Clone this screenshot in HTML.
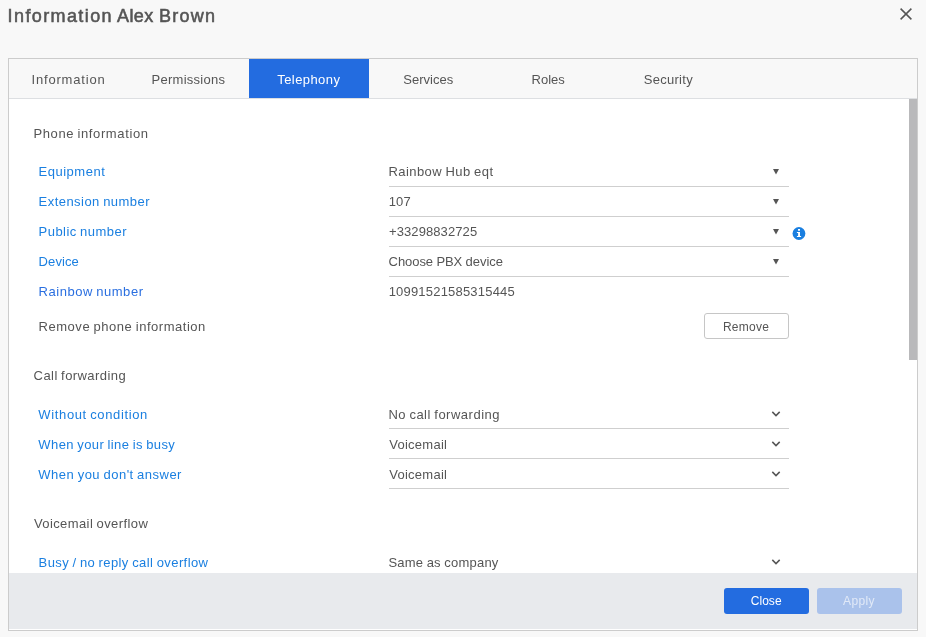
<!DOCTYPE html>
<html lang="en">
<head>
<meta charset="utf-8">
<title>Information Alex Brown</title>
<style>
html,body{margin:0;padding:0}
body{width:926px;height:637px;overflow:hidden;background:#f8f8f8;position:relative;
 font-family:"Liberation Sans",Arial,sans-serif;font-size:13px;color:#555}
.t{position:absolute;white-space:pre;line-height:20px;height:20px;font-size:13px;color:#555}
.title{left:8px;top:4px;font-size:18px;font-weight:400;-webkit-text-stroke:0.55px #555;line-height:24px;height:24px;color:#555}
.panel{position:absolute;left:8px;top:58px;width:908px;height:571px;border:1px solid #ccc;background:#fff;overflow:hidden}
.tabs{position:absolute;left:0;top:0;width:908px;height:39px;background:#f8f8f8;border-bottom:1px solid #dddfe2}
.tab{position:absolute;top:0;width:120px;height:39px;line-height:42px;text-align:center;font-size:13px;color:#555;white-space:pre}
.tab.on{background:#236ce0;color:#fff}
.lbl{color:#1a7fe0}
.lbl.rb{color:#2a6fe0}
.line{position:absolute;left:380px;width:400px;height:1px;background:#cfcfcf}
.thumb{position:absolute;left:900px;top:40px;width:8px;height:261px;background:#b9b9bb}
.footer{position:absolute;left:0;top:514px;width:908px;height:56px;background:#e8eaed}
.btn{position:absolute;box-sizing:border-box;width:85px;height:26px;border-radius:3px;text-align:center;font-size:12px;line-height:27px;white-space:pre}
.btn.remove{left:695px;top:254px;border:1px solid #c6c6c6;background:#fff;color:#555;line-height:27px}
.btn.close{left:715px;top:15px;background:#236ce0;color:#fff}
.btn.apply{left:808px;top:15px;background:#aac2eb;color:#e1e9f7}
svg{position:absolute;overflow:visible}
#root{position:absolute;left:0;top:0;width:926px;height:637px;will-change:transform}
</style>
</head>
<body>
<div id="root">
<div class="t title"><span class="x" id="ti1" style="letter-spacing:1.39px;margin-left:-0.42px;">Information</span></div><div class="t title" style="left:116px"><span class="x" id="ti2" style="letter-spacing:0.34px;margin-left:1.10px;">Alex</span></div><div class="t title" style="left:159px"><span class="x" id="ti3" style="letter-spacing:1.26px;margin-left:0.05px;">Brown</span></div>
<svg style="left:900px;top:8px" width="12" height="12" viewBox="0 0 12 12"><path d="M0.6 0.6 L11.4 11.4 M11.4 0.6 L0.6 11.4" stroke="#555" stroke-width="1.5" fill="none"/></svg>

<div class="panel">
  <div class="tabs">
    <div class="tab" style="left:0px"><span class="x" id="tab0" style="letter-spacing:0.80px;margin-left:-0.95px;">Information</span></div>
    <div class="tab" style="left:120px"><span class="x" id="tab1" style="letter-spacing:0.28px;margin-left:-1.20px;">Permissions</span></div>
    <div class="tab on" style="left:240px"><span class="x" id="tab2" style="letter-spacing:0.42px;margin-left:-0.35px;">Telephony</span></div>
    <div class="tab" style="left:360px"><span class="x" id="tab3" style="letter-spacing:0.01px;margin-left:-1.43px;">Services</span></div>
    <div class="tab" style="left:480px"><span class="x" id="tab4" style="letter-spacing:0.02px;margin-left:-1.55px;">Roles</span></div>
    <div class="tab" style="left:600px"><span class="x" id="tab5" style="letter-spacing:0.28px;margin-left:-1.30px;">Security</span></div>
  </div>
  <div class="t" style="left:25px;top:65px"><span class="x" id="h1" style="letter-spacing:0.62px;word-spacing:-0.85px;margin-left:-0.60px;">Phone information</span></div>
  <div class="t lbl" style="left:30px;top:103px"><span class="x" id="l_equip" style="letter-spacing:0.51px;margin-left:-0.45px;">Equipment</span></div>
  <div class="t" style="left:380px;top:103px"><span class="x" id="v_equip" style="letter-spacing:0.44px;word-spacing:-0.67px;margin-left:-0.55px;">Rainbow Hub eqt</span></div>
  <div class="line" style="top:127px"></div>
  <svg style="left:764px;top:110px" width="6" height="6" viewBox="0 0 6 6"><path d="M0 0H6L3 5.6Z" fill="#555"/></svg>
  <div class="t lbl" style="left:30px;top:133px"><span class="x" id="l_ext" style="letter-spacing:0.46px;word-spacing:-0.69px;margin-left:-0.45px;">Extension number</span></div>
  <div class="t" style="left:380px;top:133px"><span class="x" id="v_ext" style="letter-spacing:0.23px;margin-left:-0.38px;">107</span></div>
  <div class="line" style="top:157px"></div>
  <svg style="left:764px;top:140px" width="6" height="6" viewBox="0 0 6 6"><path d="M0 0H6L3 5.6Z" fill="#555"/></svg>
  <div class="t lbl" style="left:30px;top:163px"><span class="x" id="l_pub" style="letter-spacing:0.46px;word-spacing:-0.69px;margin-left:-0.45px;">Public number</span></div>
  <div class="t" style="left:380px;top:163px"><span class="x" id="v_pub" style="letter-spacing:0.09px;">+33298832725</span></div>
  <div class="line" style="top:187px"></div>
  <svg style="left:764px;top:170px" width="6" height="6" viewBox="0 0 6 6"><path d="M0 0H6L3 5.6Z" fill="#555"/></svg>
  <div class="t lbl" style="left:30px;top:193px"><span class="x" id="l_dev" style="letter-spacing:0.10px;margin-left:-0.45px;">Device</span></div>
  <div class="t" style="left:380px;top:193px"><span class="x" id="v_dev" style="letter-spacing:-0.06px;word-spacing:-0.17px;margin-left:-0.45px;">Choose PBX device</span></div>
  <div class="line" style="top:217px"></div>
  <svg style="left:764px;top:200px" width="6" height="6" viewBox="0 0 6 6"><path d="M0 0H6L3 5.6Z" fill="#555"/></svg>
  <div class="t lbl rb" style="left:30px;top:223px"><span class="x" id="l_rbw" style="letter-spacing:0.53px;word-spacing:-0.76px;margin-left:-0.45px;">Rainbow number</span></div>
  <div class="t" style="left:380px;top:223px"><span class="x" id="v_rbw" style="letter-spacing:0.20px;margin-left:-0.38px;">10991521585315445</span></div>
  <div class="t" style="left:30px;top:258px"><span class="x" id="rm" style="letter-spacing:0.53px;word-spacing:-0.76px;margin-left:-0.45px;">Remove phone information</span></div>
  <div class="btn remove"><span class="x" id="b_rm" style="letter-spacing:0.28px;margin-left:-0.78px;">Remove</span></div>
  <div class="t" style="left:25px;top:307px"><span class="x" id="h2" style="letter-spacing:0.43px;word-spacing:-0.66px;margin-left:-0.42px;">Call forwarding</span></div>
  <div class="t lbl" style="left:30px;top:346px"><span class="x" id="l_wc" style="letter-spacing:0.63px;word-spacing:-0.86px;margin-left:-0.65px;">Without condition</span></div>
  <div class="t" style="left:380px;top:346px"><span class="x" id="v_wc" style="letter-spacing:0.50px;word-spacing:-0.73px;margin-left:-0.62px;">No call forwarding</span></div>
  <div class="line" style="top:369px"></div>
  <svg style="left:762px;top:351px" width="10" height="8" viewBox="0 0 10 8"><path d="M1.3 1.9 L5 5.6 L8.7 1.9" stroke="#555" stroke-width="1.5" fill="none"/></svg>
  <div class="t lbl" style="left:30px;top:376px"><span class="x" id="l_busy" style="letter-spacing:0.39px;word-spacing:-0.62px;margin-left:-0.65px;">When your line is busy</span></div>
  <div class="t" style="left:380px;top:376px"><span class="x" id="v_busy" style="letter-spacing:0.26px;margin-left:0.25px;">Voicemail</span></div>
  <div class="line" style="top:399px"></div>
  <svg style="left:762px;top:381px" width="10" height="8" viewBox="0 0 10 8"><path d="M1.3 1.9 L5 5.6 L8.7 1.9" stroke="#555" stroke-width="1.5" fill="none"/></svg>
  <div class="t lbl" style="left:30px;top:406px"><span class="x" id="l_na" style="letter-spacing:0.49px;word-spacing:-0.72px;margin-left:-0.65px;">When you don't answer</span></div>
  <div class="t" style="left:380px;top:406px"><span class="x" id="v_na" style="letter-spacing:0.26px;margin-left:0.25px;">Voicemail</span></div>
  <div class="line" style="top:429px"></div>
  <svg style="left:762px;top:411px" width="10" height="8" viewBox="0 0 10 8"><path d="M1.3 1.9 L5 5.6 L8.7 1.9" stroke="#555" stroke-width="1.5" fill="none"/></svg>
  <div class="t" style="left:25px;top:455px"><span class="x" id="h3" style="letter-spacing:0.40px;word-spacing:-0.62px;margin-left:-0.05px;">Voicemail overflow</span></div>
  <div class="t lbl" style="left:30px;top:494px"><span class="x" id="l_of" style="letter-spacing:0.41px;word-spacing:-0.64px;margin-left:-0.45px;">Busy / no reply call overflow</span></div>
  <div class="t" style="left:380px;top:494px"><span class="x" id="v_of" style="letter-spacing:0.23px;word-spacing:-0.46px;margin-left:-0.62px;">Same as company</span></div>
  <svg style="left:762px;top:499px" width="10" height="8" viewBox="0 0 10 8"><path d="M1.3 1.9 L5 5.6 L8.7 1.9" stroke="#555" stroke-width="1.5" fill="none"/></svg>
  <svg style="left:783px;top:167px" width="14" height="15" viewBox="0 0 14 15"><circle cx="6.95" cy="7.5" r="6.4" fill="#1a7fe0"/><path d="M6 3.1h2v1.7h-2zM4.9 6.1H8V9.9H9.1V10.9H4.9V9.9H6.1V7H4.9Z" fill="#fff"/></svg>
  <div class="thumb"></div>
  <div class="footer">
    <div class="btn close"><span class="x" id="b_close" style="letter-spacing:0.02px;margin-left:-0.62px;">Close</span></div>
    <div class="btn apply"><span class="x" id="b_apply" style="letter-spacing:0.34px;margin-left:-1.05px;">Apply</span></div>
  </div>
</div>
</div>
</body>
</html>
